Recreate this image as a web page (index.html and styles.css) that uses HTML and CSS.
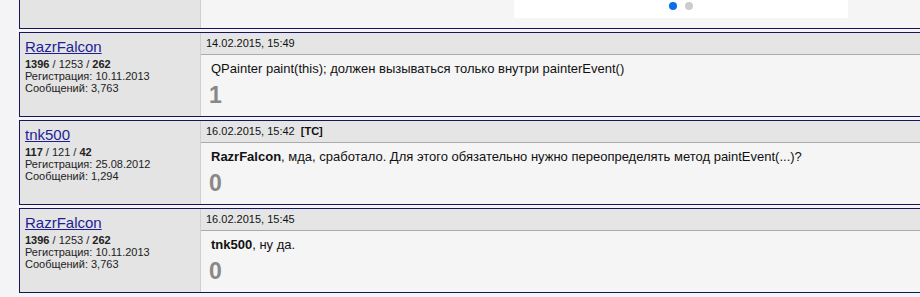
FILE: index.html
```html
<!DOCTYPE html>
<html lang="ru">
<head>
    <meta charset="UTF-8">
    <title>Форум</title>
    <link rel="stylesheet" href="styles.css">
</head>
<body>
    <div class="thread">
        <div class="post post-top">
            <div class="author"></div>
            <div class="body">
                <div class="slider">
                    <span class="dot active"></span>
                    <span class="dot"></span>
                </div>
            </div>
        </div>

        <div class="post">
            <div class="author">
                <a href="#" class="nick">RazrFalcon</a>
                <div class="stats"><b>1396</b> / 1253 / <b>262</b></div>
                <div class="info">Регистрация: 10.11.2013</div>
                <div class="info">Сообщений: 3,763</div>
            </div>
            <div class="body">
                <div class="head">14.02.2015, 15:49</div>
                <div class="text">QPainter paint(this); должен вызываться только внутри painterEvent()</div>
                <div class="rating">1</div>
            </div>
        </div>

        <div class="post">
            <div class="author">
                <a href="#" class="nick">tnk500</a>
                <div class="stats"><b>117</b> / 121 / <b>42</b></div>
                <div class="info">Регистрация: 25.08.2012</div>
                <div class="info">Сообщений: 1,294</div>
            </div>
            <div class="body">
                <div class="head">16.02.2015, 15:42 <b class="ts">[TC]</b></div>
                <div class="text"><b>RazrFalcon</b>, мда, сработало. Для этого обязательно нужно переопределять метод paintEvent(...)?</div>
                <div class="rating">0</div>
            </div>
        </div>

        <div class="post">
            <div class="author">
                <a href="#" class="nick">RazrFalcon</a>
                <div class="stats"><b>1396</b> / 1253 / <b>262</b></div>
                <div class="info">Регистрация: 10.11.2013</div>
                <div class="info">Сообщений: 3,763</div>
            </div>
            <div class="body">
                <div class="head">16.02.2015, 15:45</div>
                <div class="text"><b>tnk500</b>, ну да.</div>
                <div class="rating">0</div>
            </div>
        </div>
    </div>
</body>
</html>
```

FILE: styles.css
```css
body {
    margin: 0;
    padding-left: 19px;
    font-family: "Liberation Sans", Arial, sans-serif;
    background-color: #f4f4f6;
    color: #111;
    overflow: hidden;
}
.thread {
    width: 960px;
}
.post {
    display: grid;
    grid-template-columns: 181px 1fr;
    border: 1px solid #16165a;
    margin-bottom: 3px;
}
.post-top {
    border-top: none;
    height: 28px;
}
.author {
    background-color: #e4e4e4;
    border-right: 1px solid #cfcfcf;
    padding: 5px 5px 0 5px;
    height: 78px;
}
.post-top .author {
    height: auto;
    padding: 0;
}
.nick {
    display: block;
    font-size: 15px;
    line-height: 17px;
    color: #1e1e96;
    margin-bottom: 3px;
}
.stats, .info {
    font-size: 11px;
    line-height: 12px;
    color: #222;
}
.body {
    background-color: #f5f5f5;
}
.post-top .body {
    padding-left: 313px;
}
.slider {
    width: 334px;
    height: 18px;
    background-color: #fff;
    display: flex;
    justify-content: center;
    gap: 8px;
    padding-top: 2px;
    box-sizing: border-box;
}
.dot {
    width: 8px;
    height: 8px;
    border-radius: 50%;
    background-color: #ccc;
}
.dot.active {
    background-color: #0a6fe6;
}
.head {
    background-color: #e5e5e5;
    border-bottom: 1px solid #aaa;
    font-size: 11px;
    line-height: 21px;
    padding-left: 5px;
}
.ts {
    margin-left: 3px;
}
.text {
    font-size: 13px;
    line-height: 16px;
    padding: 6px 10px 0 10px;
}
.rating {
    font-size: 23px;
    font-weight: bold;
    color: #888;
    line-height: 26px;
    padding: 5px 8px 0 8px;
}
```
